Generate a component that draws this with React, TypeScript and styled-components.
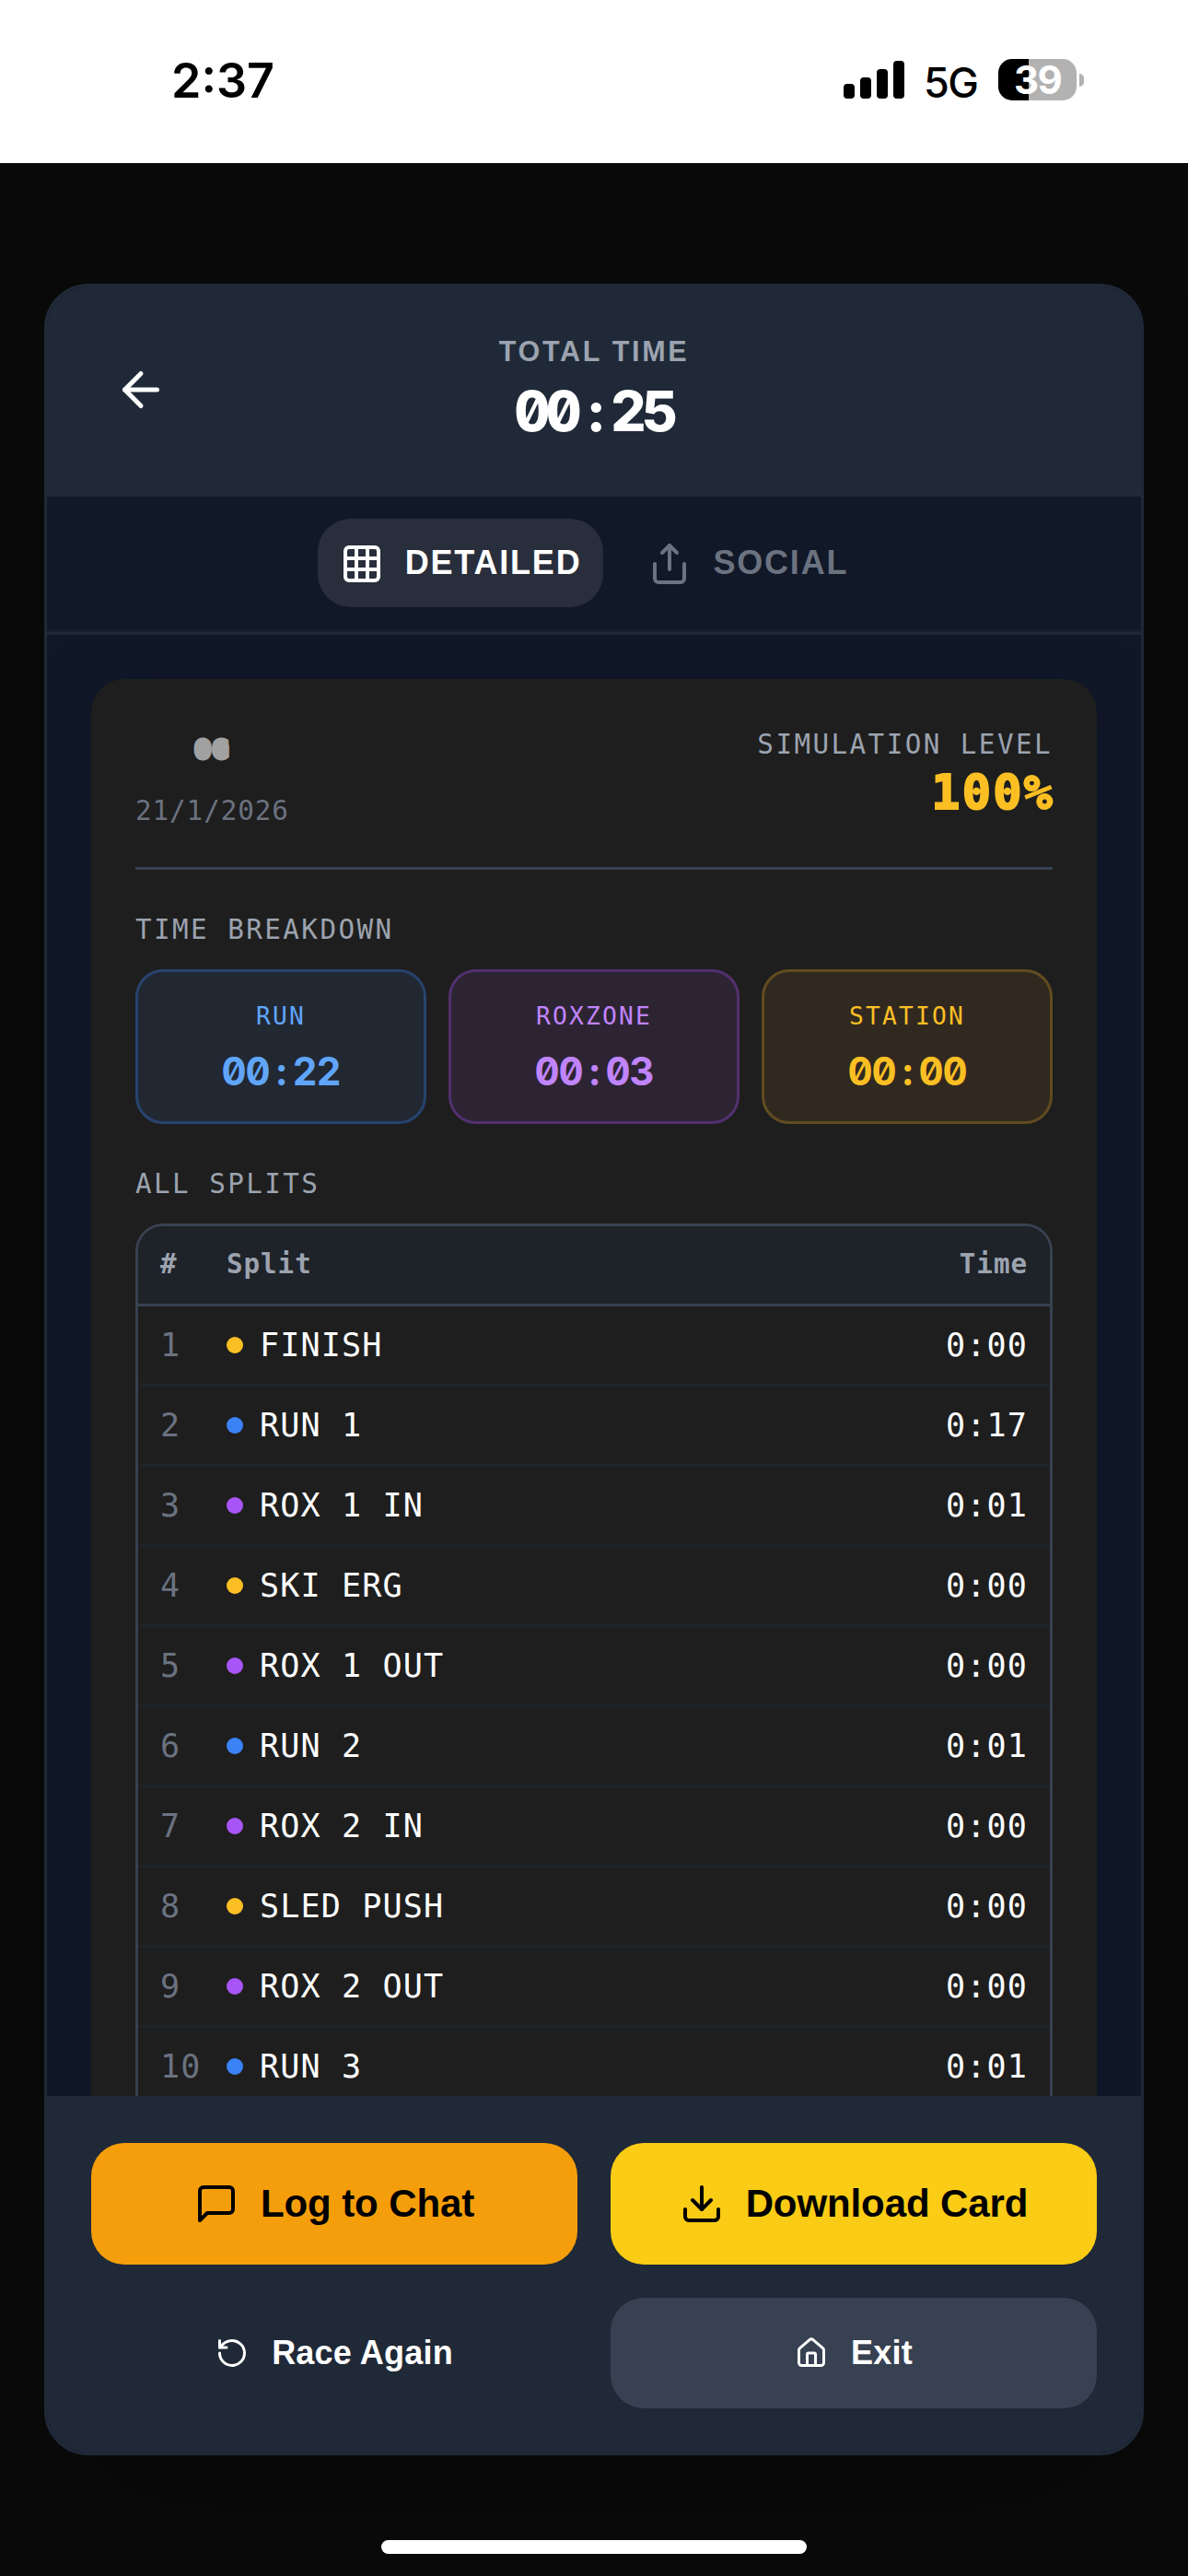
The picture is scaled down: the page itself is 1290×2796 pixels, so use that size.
import React from "react";
import styled, { createGlobalStyle } from "styled-components";
import {
  ArrowLeft,
  Download,
  Grid3x3,
  House,
  RotateCcw,
  Share,
} from "lucide-react";

const SANS = `"Liberation Sans", Arial, sans-serif`;
const UI = `Inter, "Liberation Sans", sans-serif`;
const MONO = `"DejaVu Sans Mono", "Liberation Mono", monospace`;

const GlobalStyle = createGlobalStyle`
  *, *::before, *::after { box-sizing: border-box; }
  html, body { margin: 0; padding: 0; background: #0a0a0a; }
  body { font-family: ${SANS}; color: #fff; }
  button { font: inherit; color: inherit; border: 0; margin: 0; padding: 0; background: none; }
`;

const Screen = styled.div`
  width: 1290px;
  height: 2796px;
  display: flex;
  flex-direction: column;
  background: #0a0a0a;
  overflow: hidden;
`;

/* ---------- status bar ---------- */

const StatusBar = styled.header`
  height: 177px;
  flex: none;
  display: flex;
  align-items: flex-start;
  justify-content: space-between;
  padding: 56px 113px 0 186px;
  background: #fff;
  color: #000;
  font-family: ${UI};
`;

const Clock = styled.span`
  font-size: 52px;
  line-height: 62px;
  font-weight: 600;
  padding-top: 1px;
`;

const StatusRight = styled.div`
  display: flex;
  align-items: center;
  height: 61px;
`;

const Bars = styled.div`
  display: flex;
  align-items: flex-end;
  gap: 6px;
  height: 41px;
  margin-right: 21px;
`;

const Bar = styled.i<{ $h: number }>`
  width: 12px;
  height: ${(p) => p.$h}px;
  border-radius: 4px;
  background: #000;
`;

const Network = styled.span`
  width: 81px;
  font-size: 45px;
  line-height: 60px;
  font-weight: 450;
  letter-spacing: -1.6px;
  padding-top: 6px;
`;

const Battery = styled.div`
  display: flex;
  align-items: center;
  gap: 3px;
`;

const BatteryBody = styled.div`
  width: 85px;
  height: 45px;
  border-radius: 15px;
  background: linear-gradient(90deg, #000 0 39%, #b2b2b2 39%);
  color: #fff;
  font-size: 42px;
  line-height: 46px;
  font-weight: 700;
  letter-spacing: -1.6px;
  text-align: center;
`;

const BatteryTip = styled.i`
  width: 5px;
  height: 14px;
  border-radius: 0 6px 6px 0;
  background: #b2b2b2;
`;

/* ---------- result panel ---------- */

const Stage = styled.main`
  flex: 1;
  min-height: 0;
  display: flex;
  flex-direction: column;
  padding: 131px 48px 0;
`;

const Panel = styled.section`
  height: 2357px;
  display: flex;
  flex-direction: column;
  border: 3px solid #1f2937;
  border-radius: 48px;
  overflow: hidden;
  background: #111827;
  box-shadow: 0 75px 150px -36px rgba(0, 0, 0, 0.25);
`;

const PanelHeader = styled.div`
  height: 228px;
  flex: none;
  display: grid;
  grid-template-columns: 1fr auto 1fr;
  align-items: center;
  padding: 0 48px;
  background: #1f2937;
`;

const BackButton = styled.button`
  width: 108px;
  height: 108px;
  display: grid;
  place-items: center;
  margin-bottom: 4px;
`;

const TotalBlock = styled.div`
  display: flex;
  flex-direction: column;
  align-items: center;
  gap: 12px;
  margin-bottom: 15px;
`;

const TotalLabel = styled.span`
  font-size: 30.5px;
  line-height: 45px;
  font-weight: 700;
  letter-spacing: 2.7px;
  color: #9ca3af;
`;

const Digits = styled.span<{
  $size: number;
  $line: number;
  $weight: number;
  $track: number;
  $color?: string;
}>`
  font-family: ${UI};
  font-feature-settings: "tnum", "zero";
  font-size: ${(p) => p.$size}px;
  line-height: ${(p) => p.$line}px;
  font-weight: ${(p) => p.$weight};
  letter-spacing: ${(p) => p.$track}px;
  color: ${(p) => p.$color ?? "#fff"};
`;

const Colon = styled.span<{ $size: number }>`
  display: inline-block;
  width: ${(p) => p.$size * 0.6}px;
  text-align: center;
`;

const Tabs = styled.nav`
  height: 150px;
  flex: none;
  display: flex;
  justify-content: center;
  gap: 24px;
  padding-top: 24px;
  border-bottom: 3px solid #1f2937;
  box-shadow: inset 0 -3px 0 #18202f;
`;

const Tab = styled.button<{ $active?: boolean }>`
  height: 96px;
  display: flex;
  align-items: center;
  gap: 23px;
  padding: 2px 24px 0;
  border-radius: 36px;
  background: ${(p) => (p.$active ? "#292e3c" : "transparent")};
  color: ${(p) => (p.$active ? "#fff" : "#6b7280")};
  font-size: 36px;
  line-height: 48px;
  font-weight: 700;
  letter-spacing: 1.8px;
`;

const TabLabel = styled.span`
  margin-top: -3px;
`;

const Scroll = styled.div`
  flex: 1;
  min-height: 0;
  overflow: hidden;
  padding: 48px 48px 0;
`;

const Report = styled.article`
  padding: 48px;
  border-radius: 36px;
  background: #1e1e1e;
  box-shadow: 0 12px 60px rgba(12, 22, 42, 0.5);
`;

/* ---------- report contents ---------- */

const Mono = styled.span<{
  $size: number;
  $track?: number;
  $line?: number;
  $bold?: boolean;
  $color: string;
}>`
  font-family: ${MONO};
  font-size: ${(p) => p.$size * 0.975}px;
  line-height: ${(p) => p.$line ?? 45}px;
  letter-spacing: ${(p) => p.$size * 0.031 + (p.$track ?? 0)}px;
  font-weight: ${(p) => (p.$bold ? 700 : 400)};
  color: ${(p) => p.$color};
  white-space: pre;
`;

const ReportHeader = styled.div`
  height: 159px;
  display: flex;
  justify-content: space-between;
  padding-top: 1px;
  border-bottom: 3px solid #374151;
`;

const Brand = styled.div`
  display: flex;
  flex-direction: column;
  align-items: flex-start;
`;

const Logo = styled.span`
  height: 72px;
  padding: 0 0 0 66px;
  font-family: ${MONO};
  font-size: 24px;
  line-height: 57px;
  font-weight: 700;
  letter-spacing: 4.5px;
  color: #a1a1a1;
  -webkit-text-stroke: 7px #a1a1a1;
`;

const Level = styled.div`
  display: flex;
  flex-direction: column;
  align-items: flex-end;
`;

const LevelValue = styled.span`
  font-family: ${MONO};
  font-size: 52px;
  line-height: 58px;
  font-weight: 700;
  letter-spacing: 2.1px;
  margin-right: -2px;
  color: #fbbf24;
  -webkit-text-stroke: 2px #fbbf24;
`;

const SectionTitle = styled.h2`
  display: flex;
  margin: 43px 0 20px;
  font-weight: 400;
`;

const Breakdown = styled.div`
  display: grid;
  grid-template-columns: repeat(3, 1fr);
  gap: 24px;
`;

const StatBox = styled.div<{ $bg: string; $border: string }>`
  height: 168px;
  display: flex;
  flex-direction: column;
  align-items: center;
  padding-top: 27px;
  border: 3px solid ${(p) => p.$border};
  border-radius: 30px;
  background: ${(p) => p.$bg};
`;

const Table = styled.div`
  border: 3px solid #374151;
  border-bottom: 0;
  border-radius: 30px 30px 0 0;
  overflow: hidden;
`;

const Row = styled.div<{ $head?: boolean }>`
  height: 87px;
  display: grid;
  grid-template-columns: 72px 1fr auto;
  align-items: center;
  padding: 0 24px 1px;
  background: ${(p) => (p.$head ? "#1e2229" : "transparent")};
  border-bottom: 3px solid ${(p) => (p.$head ? "#374151" : "#1f2428")};
`;

const SplitName = styled.div`
  display: flex;
  align-items: center;
  gap: 18px;
`;

const Dot = styled.i<{ $color: string }>`
  width: 18px;
  height: 18px;
  border-radius: 50%;
  background: ${(p) => p.$color};
`;

/* ---------- actions ---------- */

const Actions = styled.footer`
  height: 387px;
  flex: none;
  display: grid;
  grid-template-columns: 1fr 1fr;
  grid-template-rows: 132px 120px;
  gap: 36px;
  padding: 51px 48px 48px;
  background: #1f2937;
`;

const Action = styled.button<{
  $bg: string;
  $fg: string;
  $small?: boolean;
}>`
  display: flex;
  align-items: center;
  justify-content: center;
  gap: ${(p) => (p.$small ? 25 : 24)}px;
  border-radius: 36px;
  background: ${(p) => p.$bg};
  color: ${(p) => p.$fg};
  font-size: ${(p) => (p.$small ? 36 : 42)}px;
  font-weight: 700;
  line-height: 60px;
  letter-spacing: ${(p) => (p.$small ? 0.2 : -0.1)}px;
`;

const HomeIndicator = styled.div`
  width: 462px;
  height: 15px;
  flex: none;
  margin: auto auto 24px;
  border-radius: 8px;
  background: #fff;
`;

const AMBER = "#fbbf24";
const BLUE = "#3b82f6";
const PURPLE = "#a855f7";

const stats = [
  { label: "RUN", value: "00:22", fg: "#60a5fa", bg: "#222832", border: "#27436e" },
  { label: "ROXZONE", value: "00:03", fg: "#c084fc", bg: "#2d2433", border: "#53306f" },
  { label: "STATION", value: "00:00", fg: AMBER, bg: "#312920", border: "#614c20" },
];

const splits = [
  { name: "FINISH", time: "0:00", color: AMBER },
  { name: "RUN 1", time: "0:17", color: BLUE },
  { name: "ROX 1 IN", time: "0:01", color: PURPLE },
  { name: "SKI ERG", time: "0:00", color: AMBER },
  { name: "ROX 1 OUT", time: "0:00", color: PURPLE },
  { name: "RUN 2", time: "0:01", color: BLUE },
  { name: "ROX 2 IN", time: "0:00", color: PURPLE },
  { name: "SLED PUSH", time: "0:00", color: AMBER },
  { name: "ROX 2 OUT", time: "0:00", color: PURPLE },
  { name: "RUN 3", time: "0:01", color: BLUE },
];

type TimeProps = {
  value: string;
  size: number;
  line: number;
  weight: number;
  track?: number;
  color?: string;
};

const Time = ({ value, size, line, weight, track = 0, color }: TimeProps) => {
  const [minutes, seconds] = value.split(":");
  return (
    <Digits $size={size} $line={line} $weight={weight} $track={track} $color={color}>
      {minutes}
      <Colon $size={size}>:</Colon>
      {seconds}
    </Digits>
  );
};

const ChatIcon = () => (
  <svg
    width="48"
    height="48"
    viewBox="0 0 24 24"
    fill="none"
    stroke="currentColor"
    strokeWidth="2"
    strokeLinecap="round"
    strokeLinejoin="round"
  >
    <path d="M21 15a2 2 0 0 1-2 2H7l-4 4V5a2 2 0 0 1 2-2h14a2 2 0 0 1 2 2z" />
  </svg>
);

export default function App() {
  return (
    <Screen>
      <GlobalStyle />
      <StatusBar>
        <Clock>2:37</Clock>
        <StatusRight>
          <Bars>
            {[16, 23, 32, 41].map((h) => (
              <Bar key={h} $h={h} />
            ))}
          </Bars>
          <Network>5G</Network>
          <Battery>
            <BatteryBody>39</BatteryBody>
            <BatteryTip />
          </Battery>
        </StatusRight>
      </StatusBar>

      <Stage>
        <Panel>
          <PanelHeader>
            <BackButton aria-label="Back">
              <ArrowLeft size={60} />
            </BackButton>
            <TotalBlock>
              <TotalLabel>TOTAL TIME</TotalLabel>
              <Time value="00:25" size={60} line={60} weight={800} track={-4.5} />
            </TotalBlock>
            <span />
          </PanelHeader>

          <Tabs>
            <Tab $active>
              <Grid3x3 size={48} />
              <TabLabel>DETAILED</TabLabel>
            </Tab>
            <Tab>
              <Share size={48} />
              <TabLabel>SOCIAL</TabLabel>
            </Tab>
          </Tabs>

          <Scroll>
            <Report>
              <ReportHeader>
                <Brand>
                  <Logo>OG</Logo>
                  <Mono $size={30} $color="#6b7280">21/1/2026</Mono>
                </Brand>
                <Level>
                  <Mono $size={30} $track={1.5} $color="#9ca3af">SIMULATION LEVEL</Mono>
                  <LevelValue>100%</LevelValue>
                </Level>
              </ReportHeader>

              <SectionTitle>
                <Mono $size={30} $track={1.5} $color="#9ca3af">TIME BREAKDOWN</Mono>
              </SectionTitle>
              <Breakdown>
                {stats.map((s) => (
                  <StatBox key={s.label} $bg={s.bg} $border={s.border}>
                    <Mono $size={27} $track={1.35} $line={42} $color={s.fg}>{s.label}</Mono>
                    <Time value={s.value} size={42} line={78} weight={700} track={-1.2} color={s.fg} />
                  </StatBox>
                ))}
              </Breakdown>

              <SectionTitle>
                <Mono $size={30} $track={1.5} $color="#9ca3af">ALL SPLITS</Mono>
              </SectionTitle>
              <Table>
                <Row $head>
                  <Mono $size={30} $bold $color="#9ca3af">#</Mono>
                  <Mono $size={30} $bold $color="#9ca3af">Split</Mono>
                  <Mono $size={30} $bold $color="#9ca3af">Time</Mono>
                </Row>
                {splits.map((s, i) => (
                  <Row key={i}>
                    <Mono $size={36} $color="#6b7280">{i + 1}</Mono>
                    <SplitName>
                      <Dot $color={s.color} />
                      <Mono $size={36} $color="#fff">{s.name}</Mono>
                    </SplitName>
                    <Mono $size={36} $color="#fff">{s.time}</Mono>
                  </Row>
                ))}
              </Table>
            </Report>
          </Scroll>

          <Actions>
            <Action $bg="#f59e0b" $fg="#000">
              <ChatIcon />
              Log to Chat
            </Action>
            <Action $bg="#facc15" $fg="#000">
              <Download size={48} />
              Download Card
            </Action>
            <Action $small $bg="transparent" $fg="#fff">
              <RotateCcw size={36} />
              Race Again
            </Action>
            <Action $small $bg="#374151" $fg="#fff">
              <House size={36} />
              Exit
            </Action>
          </Actions>
        </Panel>
        <HomeIndicator />
      </Stage>
    </Screen>
  );
}
